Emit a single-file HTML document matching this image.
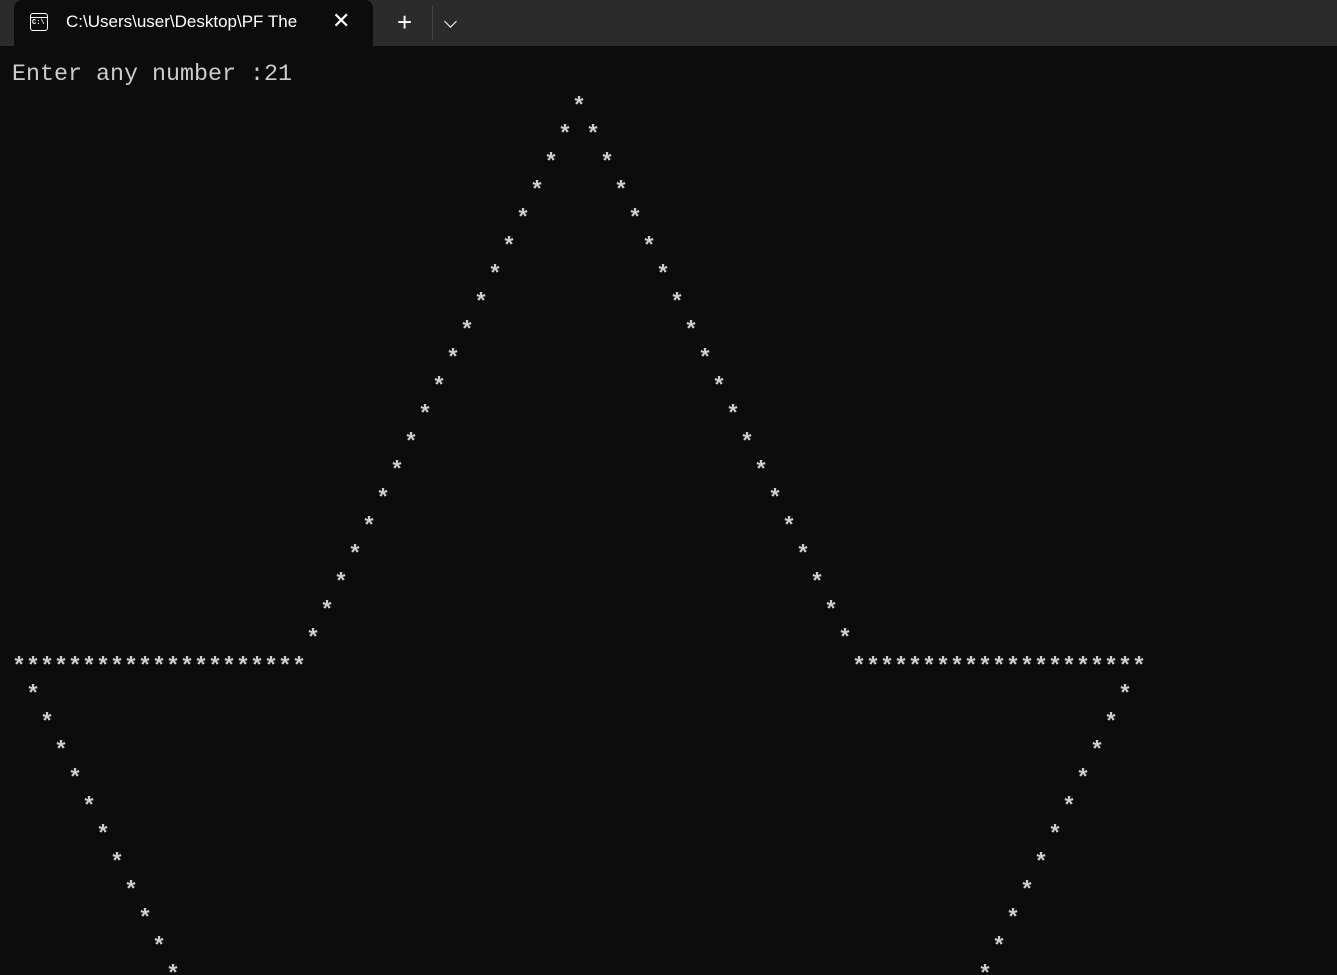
<!DOCTYPE html>
<html><head><meta charset="utf-8"><style>
html,body{margin:0;padding:0;background:#0c0c0c;width:1337px;height:975px;overflow:hidden}
.bar{position:absolute;left:0;top:0;width:1337px;height:46px;background:#2b2b2b}
.tab{position:absolute;left:14px;top:0;width:359px;height:46px;background:#0c0c0c;border-radius:8px 8px 0 0}
.tt{position:absolute;left:52px;top:12px;font:17px "Liberation Sans",sans-serif;color:#fff;white-space:nowrap;width:247px;overflow:hidden}
.ic{position:absolute;left:16px;top:13px;width:18px;height:18px;border:1.5px solid #fff;border-radius:3px;box-sizing:border-box}
.ic:before{content:"";position:absolute;left:0;right:0;top:3px;border-top:1.5px solid #fff}
.ic span{position:absolute;left:1px;top:5px;font:bold 7px "Liberation Mono",monospace;color:#fff}
.x{position:absolute;left:318px;top:8px;font:22px "Liberation Sans",sans-serif;color:#fff}
.plus{position:absolute;left:397px;top:7px;font:26px "Liberation Sans",sans-serif;color:#fff;font-weight:300}
.sep{position:absolute;left:432px;top:6px;width:1px;height:34px;background:#444}
.chev{position:absolute;left:446px;top:17px;width:8px;height:8px;border-right:1.5px solid #fff;border-bottom:1.5px solid #fff;transform:rotate(45deg)}
.t{position:absolute;font:23.33px/28px "Liberation Mono",monospace;color:#cccccc;white-space:pre}
.w{position:absolute;left:0;top:7px;width:1337px;height:968px;overflow:hidden}
.w .t{font-weight:bold}
</style></head><body>
<div class="bar"></div>
<div class="tab"><div class="ic"><span>C:\</span></div><div class="tt">C:\Users\user\Desktop\PF The</div><div class="x">✕</div></div>
<div class="plus">+</div><div class="sep"></div><div class="chev"></div>
<div class="t" style="left:12px;top:61px">Enter any number :21</div>
<div class="w">
<div class="t" style="left:572px;top:87px">*</div>
<div class="t" style="left:558px;top:115px">*</div><div class="t" style="left:586px;top:115px">*</div>
<div class="t" style="left:544px;top:143px">*</div><div class="t" style="left:600px;top:143px">*</div>
<div class="t" style="left:530px;top:171px">*</div><div class="t" style="left:614px;top:171px">*</div>
<div class="t" style="left:516px;top:199px">*</div><div class="t" style="left:628px;top:199px">*</div>
<div class="t" style="left:502px;top:227px">*</div><div class="t" style="left:642px;top:227px">*</div>
<div class="t" style="left:488px;top:255px">*</div><div class="t" style="left:656px;top:255px">*</div>
<div class="t" style="left:474px;top:283px">*</div><div class="t" style="left:670px;top:283px">*</div>
<div class="t" style="left:460px;top:311px">*</div><div class="t" style="left:684px;top:311px">*</div>
<div class="t" style="left:446px;top:339px">*</div><div class="t" style="left:698px;top:339px">*</div>
<div class="t" style="left:432px;top:367px">*</div><div class="t" style="left:712px;top:367px">*</div>
<div class="t" style="left:418px;top:395px">*</div><div class="t" style="left:726px;top:395px">*</div>
<div class="t" style="left:404px;top:423px">*</div><div class="t" style="left:740px;top:423px">*</div>
<div class="t" style="left:390px;top:451px">*</div><div class="t" style="left:754px;top:451px">*</div>
<div class="t" style="left:376px;top:479px">*</div><div class="t" style="left:768px;top:479px">*</div>
<div class="t" style="left:362px;top:507px">*</div><div class="t" style="left:782px;top:507px">*</div>
<div class="t" style="left:348px;top:535px">*</div><div class="t" style="left:796px;top:535px">*</div>
<div class="t" style="left:334px;top:563px">*</div><div class="t" style="left:810px;top:563px">*</div>
<div class="t" style="left:320px;top:591px">*</div><div class="t" style="left:824px;top:591px">*</div>
<div class="t" style="left:306px;top:619px">*</div><div class="t" style="left:838px;top:619px">*</div>
<div class="t" style="left:12px;top:647px">*********************</div><div class="t" style="left:852px;top:647px">*********************</div>
<div class="t" style="left:26px;top:675px">*</div><div class="t" style="left:1118px;top:675px">*</div>
<div class="t" style="left:40px;top:703px">*</div><div class="t" style="left:1104px;top:703px">*</div>
<div class="t" style="left:54px;top:731px">*</div><div class="t" style="left:1090px;top:731px">*</div>
<div class="t" style="left:68px;top:759px">*</div><div class="t" style="left:1076px;top:759px">*</div>
<div class="t" style="left:82px;top:787px">*</div><div class="t" style="left:1062px;top:787px">*</div>
<div class="t" style="left:96px;top:815px">*</div><div class="t" style="left:1048px;top:815px">*</div>
<div class="t" style="left:110px;top:843px">*</div><div class="t" style="left:1034px;top:843px">*</div>
<div class="t" style="left:124px;top:871px">*</div><div class="t" style="left:1020px;top:871px">*</div>
<div class="t" style="left:138px;top:899px">*</div><div class="t" style="left:1006px;top:899px">*</div>
<div class="t" style="left:152px;top:927px">*</div><div class="t" style="left:992px;top:927px">*</div>
<div class="t" style="left:166px;top:955px">*</div><div class="t" style="left:978px;top:955px">*</div>
</div>
</body></html>
